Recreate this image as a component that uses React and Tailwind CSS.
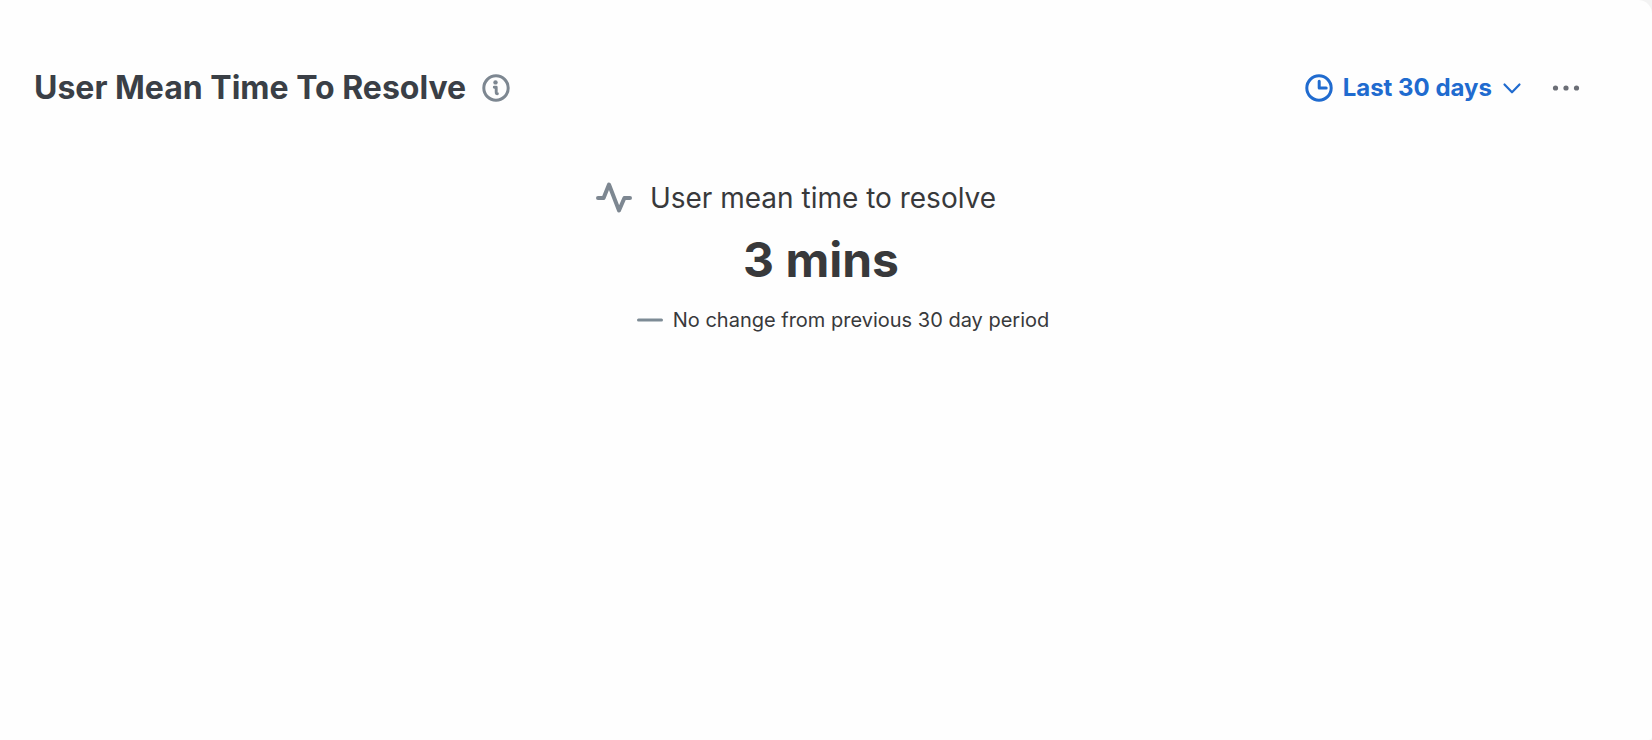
function InfoIcon() {
  return (
    <svg className="size-7" viewBox="0 0 28 28" fill="none" stroke="#7d8791" aria-hidden="true">
      <circle cx="14" cy="14" r="12.2" strokeWidth="3" />
      <circle cx="13.5" cy="8.4" r="2.2" fill="#7d8791" stroke="none" />
      <path d="M12.3 13.2h1.9v4.8c0 1.4.3 1.8 1.2 1.8" strokeWidth="2.9" strokeLinecap="round" strokeLinejoin="round" />
    </svg>
  );
}

function ClockIcon() {
  return (
    <svg className="size-7" viewBox="0 0 28 28" fill="none" stroke="currentColor" strokeWidth="3" aria-hidden="true">
      <circle cx="14" cy="14" r="12.2" />
      <path d="M14.2 7.3v6.8h7" strokeLinecap="round" strokeLinejoin="round" />
    </svg>
  );
}

function ChevronIcon() {
  return (
    <svg className="h-3 w-5" viewBox="0 0 20 12" fill="none" stroke="currentColor" strokeWidth="2.2" strokeLinecap="round" strokeLinejoin="round" aria-hidden="true">
      <path d="M2.5 2.5 10 10.3l7.5-7.8" />
    </svg>
  );
}

function MoreIcon() {
  return (
    <svg className="h-7 w-7" viewBox="0 0 28 28" fill="#6b6e76" aria-hidden="true">
      <circle cx="3.5" cy="14" r="2.6" />
      <circle cx="14" cy="14" r="2.6" />
      <circle cx="24.5" cy="14" r="2.6" />
    </svg>
  );
}

function PulseIcon() {
  return (
    <svg className="h-8 w-9" viewBox="0 0 36 32" fill="none" stroke="#7d8791" strokeWidth="4" strokeLinecap="round" strokeLinejoin="round" aria-hidden="true">
      <path d="M2 16h5.6L13 2.5l10 26L28.400 16H34" />
    </svg>
  );
}

export default function App() {
  return (
    <div className="min-h-screen bg-[#f3f3f3] font-['Inter',sans-serif]">
      <section className="min-h-screen rounded-tr-[14px] rounded-br-[4px] bg-[#fefefe] pt-16 pr-[72px] pl-[34px]">
        <header className="flex h-12 items-center justify-between">
          <div className="flex items-center gap-4">
            <h2 className="text-[32px] leading-10 font-bold text-[#3a3f46]">User Mean Time To Resolve</h2>
            <button type="button" aria-label="About this metric">
              <InfoIcon />
            </button>
          </div>
          <div className="flex items-center gap-[30px]">
            <button type="button" className="flex items-center gap-2.5 text-2xl font-bold text-[#206bcf]">
              <ClockIcon />
              <span>Last 30 days</span>
              <ChevronIcon />
            </button>
            <button type="button" aria-label="More options">
              <MoreIcon />
            </button>
          </div>
        </header>
        <div className="mt-16 flex flex-col items-center pr-2 text-[#38393b]">
          <div className="flex items-center gap-[18px] pr-[14px]">
            <PulseIcon />
            <p className="text-[28px] leading-11">User mean time to resolve</p>
          </div>
          <p className="pl-9 text-5xl leading-20 font-bold">3 mins</p>
          <div className="flex items-center gap-2.5 pl-20">
            <svg className="h-1 w-[26px]" viewBox="0 0 26 4" stroke="#7d8b95" strokeWidth="3" strokeLinecap="round" aria-hidden="true">
              <path d="M1.5 2h23" />
            </svg>
            <p className="text-xl leading-10">No change from previous 30 day period</p>
          </div>
        </div>
      </section>
    </div>
  );
}
